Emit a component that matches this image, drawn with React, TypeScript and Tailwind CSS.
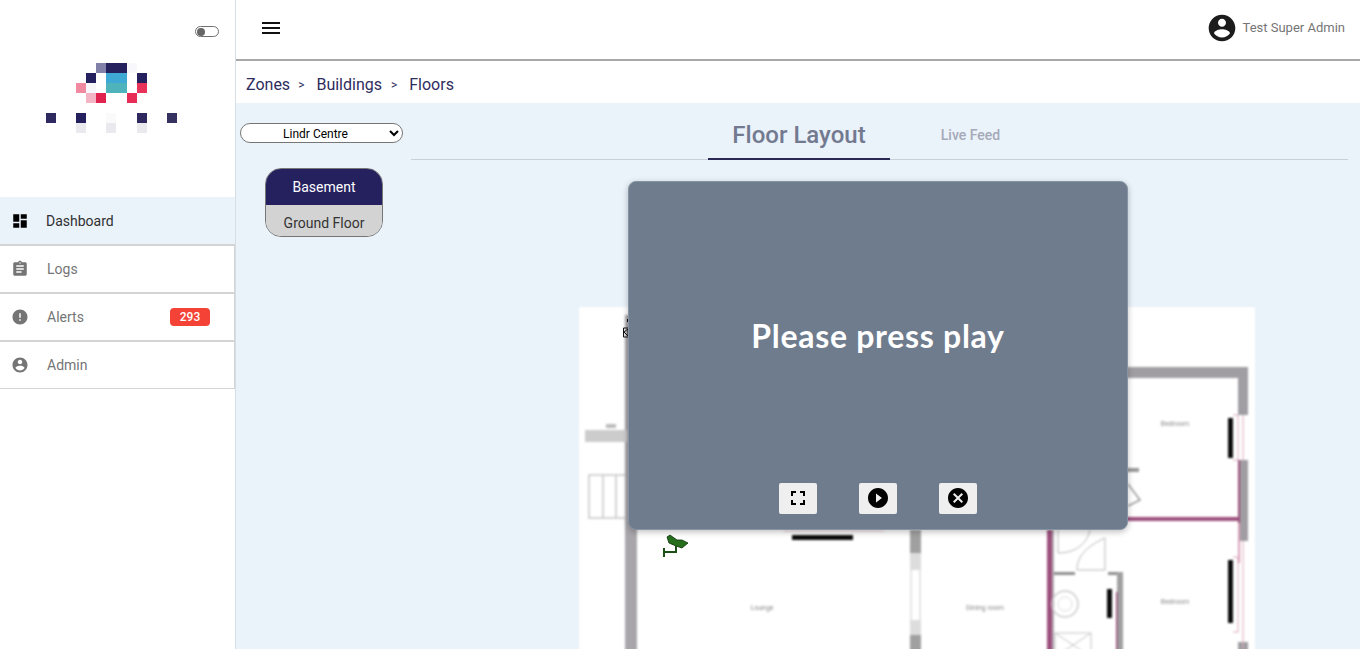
import React from 'react';

const icons = {
  dashboard: 'M3 13h8V3H3v10zm0 8h8v-6H3v6zm10 0h8V11h-8v10zm0-18v6h8V3h-8z',
  logs: 'M19 3h-4.18C14.4 1.84 13.3 1 12 1c-1.3 0-2.4.84-2.82 2H5c-1.1 0-2 .9-2 2v14c0 1.1.9 2 2 2h14c1.1 0 2-.9 2-2V5c0-1.1-.9-2-2-2zm-7 0c.55 0 1 .45 1 1s-.45 1-1 1-1-.45-1-1 .45-1 1-1zm2 14H7v-2h7v2zm3-4H7v-2h10v2zm0-4H7V7h10v2z',
  alerts: 'M12 2C6.48 2 2 6.48 2 12s4.48 10 10 10 10-4.48 10-10S17.52 2 12 2zm1 15h-2v-2h2v2zm0-4h-2V7h2v6z',
  account: 'M12 2C6.48 2 2 6.48 2 12s4.48 10 10 10 10-4.48 10-10S17.52 2 12 2zm0 3c1.66 0 3 1.34 3 3s-1.34 3-3 3-3-1.34-3-3 1.34-3 3-3zm0 14.2c-2.5 0-4.71-1.28-6-3.22.03-1.99 4-3.08 6-3.08 1.99 0 5.97 1.09 6 3.08-1.29 1.94-3.5 3.22-6 3.22z',
  menu: 'M3 18h18v-2H3v2zm0-5h18v-2H3v2zm0-7v2h18V6H3z',
  fullscreen: 'M7 14H5v5h5v-2H7v-3zm-2-4h2V7h3V5H5v5zm12 7h-3v2h5v-5h-2v3zM14 5v2h3v3h2V5h-5z',
  play: 'M12 2C6.48 2 2 6.48 2 12s4.48 10 10 10 10-4.48 10-10S17.52 2 12 2zm-2 14.5v-9l6 4.5-6 4.5z',
  cancel: 'M12 2C6.47 2 2 6.47 2 12s4.47 10 10 10 10-4.47 10-10S17.53 2 12 2zm5 13.59L15.59 17 12 13.41 8.41 17 7 15.59 10.59 12 7 8.41 8.41 7 12 10.59 15.59 7 17 8.41 13.41 12 17 15.59z',
};

const Icon = ({ d, className }: { d: string; className: string }) => (
  <svg viewBox="0 0 24 24" fill="currentColor" className={className}>
    <path d={d} />
  </svg>
);

// x, y, w, h, colour of each logo pixel
const logoPixels: [number, number, number, number, string][] = [
  [50, 0, 10, 10, '#8080a8'],
  [60, 0, 21, 10, '#25215f'],
  [81, 0, 10, 10, '#f8f8fc'],
  [40, 10, 10, 10, '#25215f'],
  [60, 10, 21, 10, '#3fa9d6'],
  [91, 10, 10, 10, '#25215f'],
  [30, 20, 10, 10, '#f08aa0'],
  [40, 20, 10, 10, '#f6f6fb'],
  [60, 20, 21, 10, '#4fb3bb'],
  [91, 20, 10, 10, '#e8325a'],
  [40, 30, 10, 10, '#f3b5c5'],
  [50, 30, 10, 10, '#e0244f'],
  [81, 30, 10, 10, '#e82c55'],
  [0, 50, 10, 10, '#2e2a60'],
  [30, 50, 10, 10, '#25215f'],
  [60, 50, 10, 10, '#fafafa'],
  [91, 50, 10, 10, '#2e2a60'],
  [121, 50, 10, 10, '#35325f'],
  [30, 60, 10, 10, '#eaeaee'],
  [60, 60, 10, 10, '#eaeaee'],
  [91, 60, 10, 10, '#eaeaee'],
];

const Logo = () => (
  <svg viewBox="0 0 131 70" className="w-[131px] h-[70px]">
    {logoPixels.map(([x, y, w, h, c], i) => (
      <rect key={i} x={x} y={y} width={w} height={h} fill={c} />
    ))}
  </svg>
);

const navItems = [
  { label: 'Logs', icon: icons.logs, rowClass: 'h-[48px] border-b-2 border-[#d4d4d4]' },
  { label: 'Alerts', icon: icons.alerts, badge: '293', rowClass: 'h-[48px] border-b-2 border-[#d4d4d4]' },
  { label: 'Admin', icon: icons.account, rowClass: 'h-[47px] border-b border-[#d4d4d4]' },
];

const Sidebar = () => (
  <aside className="w-[236px] shrink-0 bg-white border-r border-[#d8dde2] flex flex-col">
    <div className="h-[197px] relative">
      <div className="flex justify-end pt-[26px] pr-4">
        <div className="w-6 h-[11px] rounded-full border border-[#707070] flex items-center pl-px">
          <div className="w-2 h-2 rounded-full bg-[#666666]" />
        </div>
      </div>
      <div className="mt-[26px] ml-[46px]">
        <Logo />
      </div>
    </div>
    <div className="h-[49px] bg-[#eaf2fa] border-b-2 border-[#d4d4d4] flex items-center pl-[11px]">
      <Icon d={icons.dashboard} className="w-[18px] h-[18px] text-black" />
      <span className="ml-[17px] text-sm text-[#303030]">Dashboard</span>
    </div>
    {navItems.map((item) => (
      <div key={item.label} className={`border-r flex items-center pl-[11px] pr-[24px] text-[#757575] ${item.rowClass}`}>
        <Icon d={item.icon} className="w-[18px] h-[18px]" />
        <span className="ml-[18px] text-sm">{item.label}</span>
        {item.badge && (
          <span className="ml-auto w-10 h-[18px] rounded bg-[#f44336] text-white text-xs font-medium flex items-center justify-center">{item.badge}</span>
        )}
      </div>
    ))}
  </aside>
);

const Header = () => (
  <header className="relative h-[61px] shrink-0 bg-white border-b-2 border-[#a8a8a8] flex items-center justify-between pl-[23px] pr-[15px] pb-[3px]">
    <Icon d={icons.menu} className="w-6 h-6 text-[#111111]" />
    <div className="flex items-center">
      <Icon d={icons.account} className="w-8 h-8 text-[#1c1c1c]" />
      <span className="ml-[5px] text-[13px] text-[#757575]">Test Super Admin</span>
    </div>
  </header>
);

const Breadcrumbs = () => (
  <nav className="h-[42px] shrink-0 bg-white flex items-center pl-2.5 pt-[6px] text-base text-[#2f2c5e]">
    <span>Zones</span>
    <span className="ml-2 mr-3 text-xs">&gt;</span>
    <span>Buildings</span>
    <span className="ml-[9px] mr-3 text-xs">&gt;</span>
    <span>Floors</span>
  </nav>
);

const FloorPlan = () => (
  <svg viewBox="0 0 676 600" className="w-[676px] h-[600px] bg-white blur-[1px]">
    {/* outer walls */}
    <rect x="46" y="8" width="12" height="592" fill="#a8a6aa" />
    <rect x="540" y="60" width="129" height="11" fill="#a09ea2" />
    <rect x="659" y="60" width="10" height="48" fill="#a09ea2" />
    <rect x="659" y="153" width="10" height="81" fill="#a09ea2" />
    <rect x="659" y="335" width="10" height="15" fill="#a09ea2" />
    {/* landing and stairs */}
    <rect x="6" y="123" width="42" height="12" fill="#cccccc" />
    <rect x="27" y="117" width="10" height="4" fill="#bbbbbb" />
    <path d="M46 168H10v43h36M24 168v43M37 168v43" fill="none" stroke="#c8c8c8" strokeWidth="1.5" />
    {/* interior walls */}
    <rect x="331" y="223" width="11" height="23" fill="#a0a0a0" />
    <rect x="331" y="246" width="11" height="17" fill="#dddddd" />
    <path d="M332 263v50M341 263v50" stroke="#cccccc" strokeWidth="1" />
    <rect x="331" y="313" width="11" height="15" fill="#dddddd" />
    <rect x="331" y="328" width="11" height="272" fill="#a0a0a0" />
    <rect x="468" y="223" width="5" height="377" fill="#9c4f7c" />
    <rect x="473" y="223" width="2" height="377" fill="#b0a8b0" />
    <rect x="540" y="210" width="121" height="4" fill="#9c4f7c" />
    <rect x="659" y="153" width="2" height="63" fill="#9c4f7c" />
    <rect x="659" y="216" width="2" height="40" fill="#d8a0b8" />
    <rect x="475" y="265" width="21" height="3" fill="#909090" />
    <rect x="529" y="265" width="14" height="3" fill="#909090" />
    <rect x="538" y="265" width="6" height="335" fill="#a0a0a0" />
    <rect x="537" y="285" width="1.5" height="315" fill="#9c4f7c" />
    {/* windows and furniture */}
    <rect x="213" y="228" width="61" height="5" fill="#0a0a0a" />
    <path d="M205 224h100" stroke="#e4c4d0" strokeWidth="1" />
    <rect x="649" y="111" width="5" height="40" fill="#0a0a0a" />
    <rect x="649" y="253" width="5" height="63" fill="#0a0a0a" />
    <rect x="528" y="282" width="5" height="29" fill="#0a0a0a" />
    <path d="M654 108h5v45h-5M654 250h5v75h-5M664 108v45M664 234v108" fill="none" stroke="#d8a8bc" strokeWidth="1" />
    {/* doors, basin, shower */}
    <path d="M479 223v23c14 0 28-6 32-23M498 263c0-14 10-24 28-32v32M498 263h28" fill="none" stroke="#b8b8b8" strokeWidth="1" />
    <rect x="540" y="161" width="20" height="4" fill="#999999" />
    <path d="M549 177l12 16-12 6" fill="none" stroke="#999999" strokeWidth="1.5" />
    <circle cx="486" cy="297" r="13" fill="none" stroke="#cccccc" strokeWidth="1.5" />
    <circle cx="486" cy="297" r="7" fill="none" stroke="#dddddd" strokeWidth="1" />
    <path d="M476 326h36v24h-36zM476 326l36 24M512 326l-36 24" fill="none" stroke="#c4c4c4" strokeWidth="1" />
    {/* room labels */}
    <g fontFamily="Roboto, sans-serif" fontSize="7" fill="#8a8a8a" textAnchor="middle">
      <text x="183" y="303">Lounge</text>
      <text x="406" y="303">Dining room</text>
      <text x="596" y="119">Bedroom</text>
      <text x="596" y="297">Bedroom</text>
    </g>
  </svg>
);

const CameraMarker = () => (
  <svg viewBox="0 0 27 28" className="absolute left-[251px] top-[427px] w-[27px] h-[28px]">
    <path d="M5 7l3-2 7 5h5l6 3-6 5-6-2-7-3z" fill="#256f1c" stroke="#0d2d0a" strokeWidth="0.8" />
    <path d="M2 18v9M2 22h12v-6" fill="none" stroke="#1c4f16" strokeWidth="2" />
  </svg>
);

const DoorMarker = () => (
  <svg viewBox="0 0 6 19" className="absolute left-[212px] top-[216px] w-[6px] h-[19px]">
    <rect x="4" y="0" width="2" height="3" fill="#111111" />
    <path d="M0.5 9h5M0.5 9v9h5M1 13l4-3v7z" fill="none" stroke="#111111" strokeWidth="1" />
  </svg>
);

const VideoModal = () => (
  <div className="absolute left-[217px] top-[78px] w-[500px] h-[349px] rounded-lg border border-[#8794a3] bg-[#6f7c8d] shadow-[0_2px_6px_rgba(0,0,0,0.25)] flex flex-col items-center">
    <div className="mt-[130px] h-[48px] flex items-center text-white text-[32px] font-bold tracking-[0.7px] font-['Lato',sans-serif]">
      Please press play
    </div>
    <div className="mt-auto mb-[15px] flex gap-[42px]">
      {[icons.fullscreen, icons.play, icons.cancel].map((d) => (
        <button key={d} className="w-[38px] h-[31px] rounded-[2px] bg-[#efefef] flex items-center justify-center pb-px text-black">
          <Icon d={d} className="w-6 h-6" />
        </button>
      ))}
    </div>
  </div>
);

export default function App() {
  return (
    <div className="h-screen overflow-hidden flex bg-white font-['Roboto',sans-serif]">
      <Sidebar />
      <div className="flex-1 min-w-0 flex flex-col">
        <Header />
        <Breadcrumbs />
        <div className="flex-1 min-h-0 bg-[#eaf2fa] flex">
          <div className="w-[175px] shrink-0 pt-5 pl-1">
            <select className="block w-[163px] h-5 pt-px rounded-full border border-[#767676] bg-white text-xs text-center text-black">
              <option>Lindr Centre</option>
            </select>
            <div className="mt-[25px] ml-[25px] w-[118px] rounded-[16px] border border-[#767676] overflow-hidden text-sm text-center">
              <div className="h-[36px] bg-[#25215f] text-white flex items-center justify-center">Basement</div>
              <div className="h-[31px] pt-[5px] bg-[#d3d3d3] text-[#333333] flex items-center justify-center">Ground Floor</div>
            </div>
          </div>
          <div className="relative flex-1 min-w-0 mr-3">
            <div className="h-[57px] border-b border-[#c9d0da] flex justify-center">
              <div className="w-[182px] h-[57px] pt-2 border-b-2 border-[#2b2a55] flex items-center justify-center text-2xl font-medium text-[#737a90]">Floor Layout</div>
              <div className="w-[161px] h-[56px] pt-2 flex items-center justify-center text-sm font-medium text-[#a5a9b8]">Live Feed</div>
            </div>
            <div className="mt-[147px] ml-[168px] w-[676px]">
              <FloorPlan />
            </div>
            <DoorMarker />
            <CameraMarker />
            <VideoModal />
          </div>
        </div>
      </div>
    </div>
  );
}
